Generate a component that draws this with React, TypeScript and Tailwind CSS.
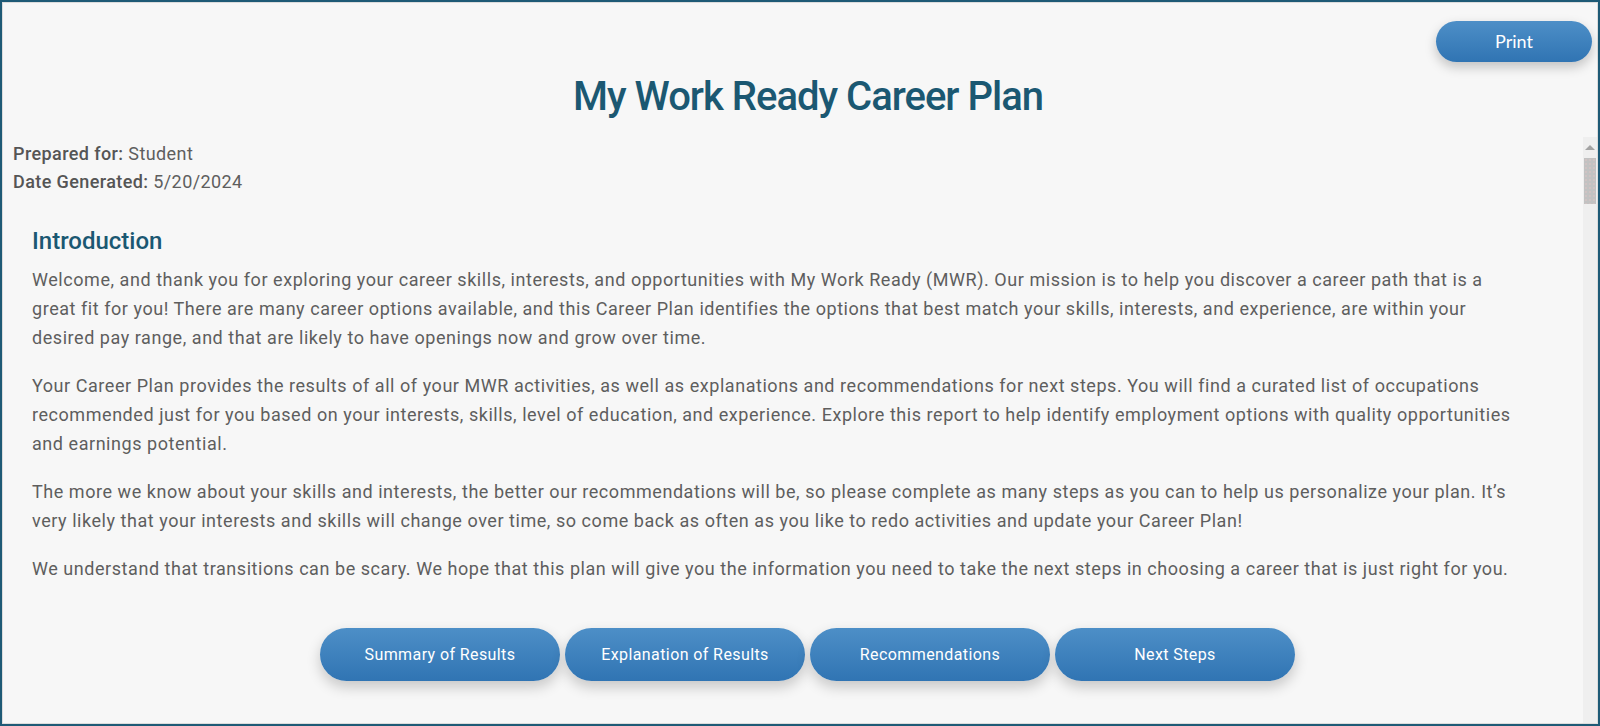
const navButtons = ["Summary of Results", "Explanation of Results", "Recommendations", "Next Steps"];

const paragraphs = [
  "Welcome, and thank you for exploring your career skills, interests, and opportunities with My Work Ready (MWR). Our mission is to help you discover a career path that is a great fit for you! There are many career options available, and this Career Plan identifies the options that best match your skills, interests, and experience, are within your desired pay range, and that are likely to have openings now and grow over time.",
  "Your Career Plan provides the results of all of your MWR activities, as well as explanations and recommendations for next steps. You will find a curated list of occupations recommended just for you based on your interests, skills, level of education, and experience. Explore this report to help identify employment options with quality opportunities and earnings potential.",
  "The more we know about your skills and interests, the better our recommendations will be, so please complete as many steps as you can to help us personalize your plan. It\u2019s very likely that your interests and skills will change over time, so come back as often as you like to redo activities and update your Career Plan!",
  "We understand that transitions can be scary. We hope that this plan will give you the information you need to take the next steps in choosing a career that is just right for you.",
];

function Scrollbar() {
  return (
    <div className="w-[14px] shrink-0 bg-[#efefef] flex flex-col items-center pt-[8px]">
      <div className="w-0 h-0 border-l-[5px] border-r-[5px] border-b-[5px] border-l-transparent border-r-transparent border-b-[#a3a3a3]" />
      <div className="mt-[8px] w-[12px] h-[46px] bg-[#c2c2c2] bg-[radial-gradient(#d8c4c4_0.6px,transparent_0.9px)] bg-[length:4px_4px]" />
    </div>
  );
}

export default function App() {
  return (
    <div className="w-[1600px] h-[726px] border-2 border-[#1e5a76] font-['Roboto',sans-serif]">
      <div className="h-full flex flex-col border border-[#dcdcdc] bg-[#f7f7f7]">
        <header className="h-[134px] shrink-0">
          <div className="flex justify-end pt-[18px] pr-[5px]">
            <button className="w-[156px] h-[41px] rounded-full bg-gradient-to-b from-[#4d8fc7] to-[#3074b3] text-white text-[18px] font-['Lato',sans-serif] shadow-[0_5px_12px_rgba(0,0,0,0.22)]">
              Print
            </button>
          </div>
          <h1 className="mt-[11px] pl-4 text-center text-[40px] leading-[48px] font-medium tracking-[-1px] text-[#1b5872]">
            My Work Ready Career Plan
          </h1>
        </header>

        <div className="flex-1 flex min-h-0">
          <main className="flex-1 overflow-hidden pt-[3px] pl-[10px] text-[#5e5e5e] tracking-[0.4px]">
            <div className="text-[18px] leading-[28px]">
              <div>
                <span className="font-medium text-[#555]">Prepared for:</span> Student
              </div>
              <div>
                <span className="font-medium text-[#555]">Date Generated:</span> 5/20/2024
              </div>
            </div>

            <section className="mt-[29px] ml-[19px]">
              <h2 className="text-[24px] leading-[32px] font-medium tracking-normal text-[#1b5872] mb-[8px]">
                Introduction
              </h2>
              <div className="pr-[68px]">
                {paragraphs.map((p, i) => (
                  <p key={i} className="text-[18px] leading-[29px] tracking-[0.55px] mb-[19px]">
                    {p}
                  </p>
                ))}
              </div>

              <div className="flex justify-center gap-[5px] mt-[45px]">
                {navButtons.map((label) => (
                  <button
                    key={label}
                    className="w-[240px] h-[53px] rounded-full bg-gradient-to-b from-[#4d8fc7] to-[#3074b3] text-white text-[16px] tracking-[0.4px] shadow-[0_6px_14px_rgba(0,0,0,0.2)]"
                  >
                    {label}
                  </button>
                ))}
              </div>
            </section>
          </main>
          <Scrollbar />
        </div>
      </div>
    </div>
  );
}
